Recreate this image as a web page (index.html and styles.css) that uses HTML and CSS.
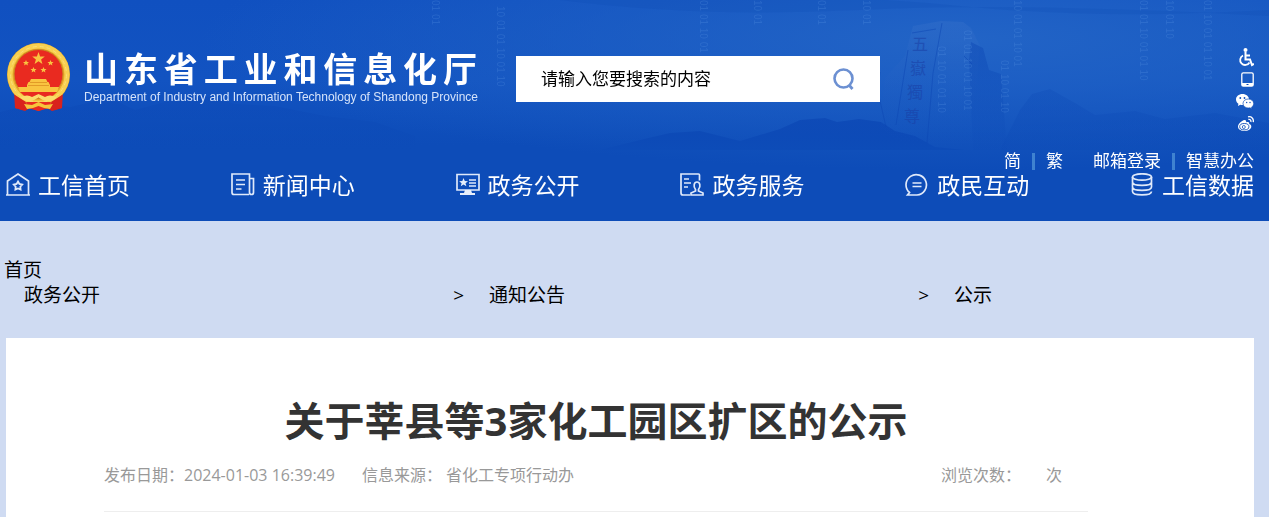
FILE: index.html
```html
<!DOCTYPE html>
<html lang="zh-CN">
<head>
  <meta charset="UTF-8">
  <meta name="viewport" content="width=device-width, initial-scale=1.0">
  <title>关于莘县等3家化工园区扩区的公示</title>
  <link rel="stylesheet" href="styles.css">
</head>
<body>
  <header class="header">
    <!-- banner scenery -->
    <svg class="header-bg" viewBox="0 0 1269 150" preserveAspectRatio="xMidYMin slice" aria-hidden="true">
      <defs>
        <linearGradient id="fade" x1="0" y1="0" x2="0" y2="1">
          <stop offset="0" stop-color="#0b46b4" stop-opacity=".7"/>
          <stop offset="1" stop-color="#0d4cb8" stop-opacity="1"/>
        </linearGradient>
        <linearGradient id="stone" x1="0" y1="0" x2="0" y2="1">
          <stop offset="0" stop-color="#3a73cc" stop-opacity=".35"/>
          <stop offset="1" stop-color="#0d4cb8" stop-opacity="0"/>
        </linearGradient>
        <linearGradient id="shade" x1="0" y1="0" x2="0" y2="1">
          <stop offset="0" stop-color="#0b46b4" stop-opacity=".75"/>
          <stop offset="1" stop-color="#0d4cb8" stop-opacity=".3"/>
        </linearGradient>
      </defs>
      <path d="M560 0Q700 18 860 10T1269 16V10Q1100 20 960 6T700 0Z" fill="#0b46b4" opacity=".18"/>
      <path d="M0 150V112l40-10 30 5 40-9 25 12 30-8 40-6 30 8 40 2 50 10 50 6 40 14v14Z" fill="url(#fade)" opacity=".45"/>
      <path d="M1000 150l20-40 12-16 18-5 25 14 20 12 40-4 30 8 50-6 54 10v29Z" fill="url(#fade)" opacity=".35"/>
      <path d="M600 150l40-10 30-7 30-2 40 10 40-12 20-9 25-2 12 4 22-3 22 3 14 9 20 5 20 11 30 3Z" fill="url(#fade)"/>
      <path d="M880 128l5-50 20-22 8-30 28-5 22 1 8 6 9 18-10 104h-60Z" fill="url(#stone)"/>
      <path d="M971 42l12 6 6 22 12 4 6 76h-34l-4-90Z" fill="url(#shade)" opacity=".6"/>
      <path d="M942 23l-9 50-6 70M908 50l-12 75M912 33l24-4M880 72l-2 20 8 35M964 56l8 8" fill="none" stroke="#0b46b4" stroke-opacity=".5"/>
      <g class="stone-text">
        <text x="912" y="50">五</text>
        <text x="910" y="74">嶽</text>
        <text x="907" y="98">獨</text>
        <text x="904" y="122">尊</text>
      </g>
      <g class="code-rain">
        <text transform="translate(432 0) rotate(90)">01 01</text>
        <text transform="translate(497 6) rotate(90)">10 01 01 10 01 10</text>
        <text transform="translate(700 0) rotate(90)">01 01 10 01 01 10 01</text>
        <text transform="translate(754 0) rotate(90)">10 01</text>
        <text transform="translate(818 0) rotate(90)">01 01</text>
        <text transform="translate(863 0) rotate(90)">10 01</text>
        <text transform="translate(938 46) rotate(90)">01 10 01 01 10</text>
        <text transform="translate(964 30) rotate(90)">01 01 10 01 10 01</text>
        <text transform="translate(1014 0) rotate(90)">10 01 01 10 01</text>
        <text transform="translate(1001 60) rotate(90)">01 10 01 10</text>
        <text transform="translate(1140 0) rotate(90)">01 01 10 01 01 10</text>
        <text transform="translate(1166 0) rotate(90)">10 01 10</text>
        <text transform="translate(1204 0) rotate(90)">01 10 01 01 10 01</text>
      </g>
    </svg>

    <div class="header-top">
      <a class="logo" href="#">
        <svg class="emblem" viewBox="0 0 65 69" aria-hidden="true">
          <path d="M8 48l1 17 10 3 5-3 8.500 3 8.500-3 5 3 10-3 1-17Z" fill="#d9231c"/>
          <path d="M9 58q6 3 12 0M44 58q6 3 12 0M14 60l-2 6M51 60l2 6" stroke="#9f1411" fill="none"/>
          <circle cx="32.500" cy="31.500" r="31.500" fill="#e7a92a"/>
          <circle cx="32.500" cy="31.500" r="28.500" fill="none" stroke="#f8cf50" stroke-width="5"/>
          <circle cx="32.500" cy="31.500" r="28" fill="none" stroke="#fbdf78" stroke-dasharray="4 3"/>
          <circle cx="32.500" cy="31" r="24.500" fill="#e92a20" stroke="#c98a20"/>
          <path d="M32.500 9l1.600 4.400 4.700.1-3.700 2.900 1.300 4.600-3.900-2.700-3.900 2.700 1.300-4.600-3.700-2.900 4.700-.1Z" fill="#f9c440"/>
          <g fill="#f9c440">
            <path d="M20 17l.9 1.900 2.100.1-1.600 1.400.5 2.100-1.900-1.200-1.900 1.200.5-2.100-1.600-1.400 2.100-.1Z"/>
            <path d="M44.500 17l.9 1.900 2.100.1-1.600 1.400.5 2.100-1.900-1.200-1.900 1.200.5-2.100-1.600-1.400 2.100-.1Z"/>
            <path d="M27.500 24l.9 1.900 2.100.1-1.600 1.400.5 2.100-1.900-1.200-1.900 1.200.5-2.100-1.600-1.400 2.100-.1Z"/>
            <path d="M37.500 24l.9 1.900 2.100.1-1.600 1.400.5 2.100-1.900-1.200-1.900 1.200.5-2.100-1.600-1.400 2.100-.1Z"/>
            <path d="M25 36h15l1.500 3h1l1.500 3v2H21v-2l1.500-3h1Z"/>
            <path d="M12 44h41l-2 5H14Z"/>
          </g>
          <path d="M24 39.500h17M22 42.500h21" stroke="#d98a1c" stroke-width=".7"/>
          <path d="M14 49h37l-7 6H21Z" fill="#e92a20"/>
          <path d="M9 52l11 7-3 8-8-2ZM56 52l-11 7 3 8 8-2Z" fill="#d9231c"/>
          <path d="M14 54q8-3 12 0l6.500-3 6.500 3q4-3 12 0-4 5-11 4-4-1-7.500-3.500Q29 57 25 58q-7 1-11-4Z" fill="#fbdc6b"/>
          <path d="M20 59h25l-2 6-10.500 3L22 65Z" fill="#e92a20"/>
          <path d="M18 61l8 1 6.500-3 6.500 3 8-1-3 5-6-1-5.500-2-5.500 2-6 1Z" fill="#f6c53c"/>
        </svg>
        <span class="logo-text">
          <strong class="logo-cn">山东省工业和信息化厅</strong>
          <span class="logo-en">Department of Industry and Information Technology of Shandong Province</span>
        </span>
      </a>

      <form class="search">
        <input class="search-input" type="text" aria-label="搜索" placeholder="请输入您要搜索的内容">
        <button class="search-btn" type="button" aria-label="搜索">
          <svg width="22" height="24" viewBox="0 0 22 24" fill="none" stroke="#6c90d2">
            <circle cx="10.500" cy="11.500" r="9" stroke-width="2.600"/>
            <path d="M16 18l3.500 4" stroke-width="2.800"/>
          </svg>
        </button>
      </form>

      <div class="tools">
        <a href="#" aria-label="无障碍">
          <svg width="16" height="19" viewBox="0 0 16 19" fill="none" stroke="#fff" stroke-width="2">
            <circle cx="7.500" cy="2" r="2" fill="#fff" stroke="none"/>
            <path d="M7.500 4v7.500h4.500l2 5.500 2-1M7.500 7.500h4.500" stroke-width="2"/>
            <path d="M5 7.500a5 5 0 1 0 6.500 7" stroke-width="1.800"/>
          </svg>
        </a>
        <a href="#" aria-label="手机版">
          <svg width="13" height="15" viewBox="0 0 13 15">
            <rect x=".8" y=".8" width="11.400" height="13.400" rx="1.500" fill="none" stroke="#fff" stroke-width="1.300"/>
            <path d="M1 11h11v3H1Z" fill="#fff"/>
            <path d="M5.500 12.500h2" stroke="#0d4cb8"/>
          </svg>
        </a>
        <a href="#" aria-label="微信">
          <svg width="18" height="15" viewBox="0 0 18 15">
            <path d="M6.500 0C2.800 0 0 2.400 0 5.500c0 1.800 1 3.300 2.400 4.300L2 12l2.300-1.300c.7.200 1.400.3 2.200.3C10.200 11 13 8.600 13 5.500S10.200 0 6.500 0Z" fill="#fff"/>
            <path d="M12.300 5C9.300 5 7 7 7 9.500S9.300 14 12.300 14c.6 0 1.200-.1 1.700-.2l2 1.200-.4-1.900c1.300-.8 2.100-2.100 2.100-3.600C17.700 7 15.300 5 12.300 5Z" fill="#fff" stroke="#0d4cb8" stroke-width=".7"/>
            <g fill="#0d4cb8"><circle cx="4.300" cy="4" r=".9"/><circle cx="8.500" cy="4" r=".9"/><circle cx="10.700" cy="8.500" r=".7"/><circle cx="14" cy="8.500" r=".7"/></g>
          </svg>
        </a>
        <a href="#" aria-label="微博">
          <svg width="16" height="15" viewBox="0 0 16 15">
            <path d="M6.500 4C3.500 4.700 0 7.800 0 10.500 0 13.300 3 15 6.300 15c4 0 7-2.200 7-4.600 0-1.400-1-2.200-2.200-2.500.6-1.700-.7-2.500-3-1.600.4-1.500-.2-2.500-1.600-2.300Z" fill="#fff"/>
            <ellipse cx="6.300" cy="10.700" rx="4.600" ry="3.200" fill="none" stroke="#0d4cb8" stroke-width=".9"/>
            <circle cx="5.800" cy="11" r="1.500" fill="none" stroke="#0d4cb8" stroke-width=".8"/>
            <path d="M10 .8c3.500-.7 6 2 5.200 5.400M10.300 3.400c1.800-.4 3 .9 2.500 2.600" fill="none" stroke="#fff" stroke-width="1.300"/>
          </svg>
        </a>
      </div>
    </div>

    <div class="links">
      <a href="#">简</a><i class="bar"></i><a href="#">繁</a>
      <a class="mail" href="#">邮箱登录</a><i class="bar"></i><a href="#">智慧办公</a>
    </div>

    <nav class="nav">
      <a href="#">
        <svg viewBox="0 0 24 24"><path d="M1.500 22V8L12 1 22.500 8v14M0 22h24"/><path d="M12 8.500l1.400 2.500 2.800.6-1.900 2.100.3 2.800-2.600-1.100-2.600 1.100.3-2.800-1.900-2.100 2.800-.6Z" stroke-width="1.800"/></svg>
        工信首页
      </a>
      <a href="#">
        <svg viewBox="0 0 24 24"><path d="M18 21.500H3a2 2 0 0 1-2-2V1h17.500v18.500a2 2 0 0 0 4 0V5.500H19M19 21.500h1.500M5 7h9M5 11.500h9M5 16h5.500"/></svg>
        新闻中心
      </a>
      <a href="#">
        <svg viewBox="0 0 24 24"><path d="M1 1.500h22V17H1ZM13 7h7M13 10h7M13 13h7"/><path d="M9 17h6l1 3h3v2H4v-2h4ZM7.500 5l1.300 3 3.200.2-2.500 2 .9 3.100-2.900-1.700-2.700 1.700.8-3.100-2.500-2 3.200-.2Z" fill="#e6eefb" stroke="none"/></svg>
        政务公开
      </a>
      <a href="#">
        <svg viewBox="0 0 24 24"><path d="M10 22H3a2 2 0 0 1-2-2V1h17.500a1 1 0 0 1 1 1v5.500M4 6h5M4 10h7M4 14h4"/><path d="M11 22v-2l4.500-2v-1.500c-2.500-3-1.500-7.500 1.500-7.500s4 4.500 1.500 7.500v1.500L23 20v2Z"/></svg>
        政务服务
      </a>
      <a href="#">
        <svg viewBox="0 0 24 24"><path d="M4.500 19.500A10.200 10.200 0 1 1 12 22H2.500ZM7.500 10h9M7.500 13.500h9"/></svg>
        政民互动
      </a>
      <a href="#">
        <svg viewBox="0 0 24 24"><ellipse cx="12" cy="4" rx="9.500" ry="3.200"/><path d="M2.500 4v5c0 4.500 19 4.500 19 0V4M2.500 9.500V14c0 4.500 19 4.500 19 0V9.500M2.500 14.500v4c0 4.500 19 4.500 19 0"/></svg>
        工信数据
      </a>
    </nav>
  </header>

  <div class="crumbs">
    <a class="crumb-home" href="#">首页</a>
    <ul class="crumb-list">
      <li><a href="#">政务公开</a><span>&gt;</span></li>
      <li><a href="#">通知公告</a><span>&gt;</span></li>
      <li><a href="#">公示</a></li>
    </ul>
  </div>

  <main class="article">
    <h1>关于莘县等3家化工园区扩区的公示</h1>
    <div class="meta">
      <span>发布日期：2024-01-03 16:39:49</span>
      <span>信息来源： 省化工专项行动办</span>
      <span class="views">浏览次数：<span class="unit">次</span></span>
    </div>
  </main>
</body>
</html>
```

FILE: styles.css
```css
* {
  box-sizing: border-box;
}
body {
  margin: 0;
  min-height: 100vh;
  display: flex;
  flex-direction: column;
  background: #cfdbf2;
  color: #000;
  font-family: "Open Sans", "Noto Sans CJK SC", sans-serif;
}
a {
  color: inherit;
  text-decoration: none;
}
svg {
  display: block;
}

/* header */
.header {
  position: relative;
  padding: 43px 15px 24px 6px;
  background: radial-gradient(ellipse 760px 130px at 960px 40px, #2264c6, transparent), linear-gradient(#1050c0, #1253c1 80px, #0d4cb8 145px);
  color: #fff;
}
.header-bg {
  position: absolute;
  top: 0;
  left: 0;
  width: 100%;
  height: 150px;
}
.stone-text {
  fill: #1a3fa6;
  opacity: 0.55;
  font-family: "Noto Sans CJK TC", sans-serif;
  font-size: 16px;
}
.code-rain {
  fill: #5f9ae6;
  opacity: 0.25;
  font-family: "Liberation Sans", sans-serif;
  font-size: 10px;
}
.header-top, .links, .nav {
  position: relative;
  display: flex;
}
.header-top {
  height: 106px;
  align-items: flex-start;
}
.logo {
  display: flex;
  gap: 13px;
}
.emblem {
  width: 65px;
  height: 69px;
}
.logo-text {
  width: 393px;
  padding-top: 5px;
}
.logo-cn, .logo-en {
  display: block;
  white-space: nowrap;
}
.logo-cn {
  font-size: 34px;
  line-height: 42px;
  text-align-last: justify;
}
.logo-en {
  font-family: "Liberation Sans", sans-serif;
  font-size: 12px;
  line-height: 14px;
  color: #d5e3fa;
}
.search {
  display: flex;
  width: 364px;
  height: 46px;
  margin: 13px 0 0 39px;
  background: #fff;
}
.search-input {
  flex: 1;
  min-width: 0;
  padding: 0 0 2px 25px;
  border: 0;
  background: none;
  font: inherit;
  font-size: 17px;
}
.search-input::placeholder {
  color: #000;
}
.search-btn {
  display: flex;
  align-items: center;
  padding: 0 25px;
  border: 0;
  background: none;
  cursor: pointer;
}
.tools {
  display: grid;
  grid-auto-rows: 22px;
  align-items: center;
  justify-items: end;
  margin: 3px 0 0 auto;
}
.links {
  justify-content: flex-end;
  align-items: center;
  font-size: 17px;
  line-height: 24px;
}
.bar {
  width: 3px;
  height: 17px;
  margin: 0 11px;
  background: #3f82d0;
}
.mail {
  margin-left: 30px;
}
.nav {
  justify-content: space-between;
  font-size: 23px;
  line-height: 24px;
}
.nav a {
  display: flex;
  gap: 8px;
}
.nav svg {
  width: 24px;
  height: 24px;
  fill: none;
  stroke: #dfe9fa;
  stroke-width: 1.7;
}

/* breadcrumb */
.crumbs {
  padding: 37px 5px 30px 4px;
  font-size: 19px;
  line-height: 25px;
}
.crumb-home {
  display: block;
}
.crumb-list {
  display: grid;
  grid-template-columns: 3fr 3fr 2fr;
  margin: 0;
  padding: 0 0 0 20px;
  list-style: none;
}
.crumb-list li {
  display: flex;
  justify-content: space-between;
  padding-right: 25px;
}

/* article */
.article {
  flex: 1;
  margin: 0 15px 0 6px;
  padding: 53px 166px 0 98px;
  background: #fff;
}
.article h1 {
  margin: 0;
  color: #333;
  font-size: 40px;
  line-height: 60px;
  text-align: center;
}
.meta {
  display: flex;
  gap: 27px;
  padding: 12px 26px 24px 0;
  border-bottom: 1px solid #eee;
  color: #999;
  font-size: 16px;
  line-height: 24px;
}
.views {
  margin-left: auto;
}
.unit {
  margin-left: 25px;
}
```
